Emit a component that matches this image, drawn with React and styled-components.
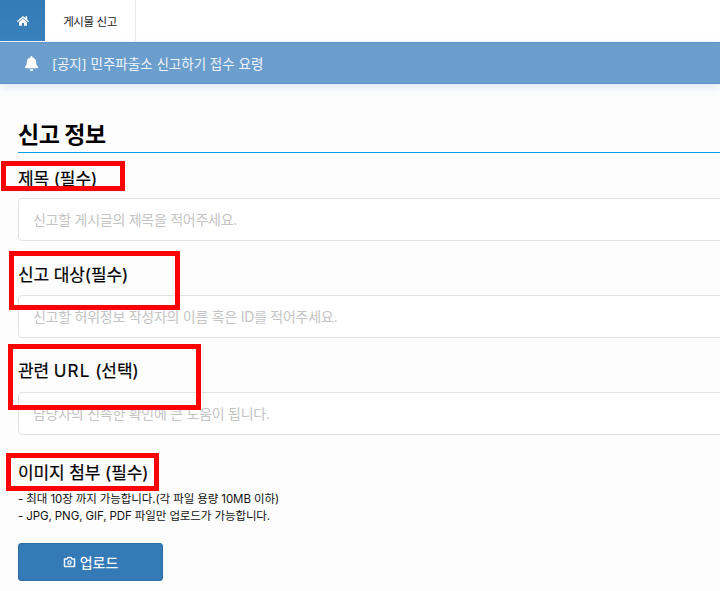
import React from "react";
import styled, { createGlobalStyle } from "styled-components";
import { FaHome, FaBell } from "react-icons/fa";

const GlobalStyle = createGlobalStyle`
  html, body {
    margin: 0;
    padding: 0;
    background: #fdfdfd;
    overflow: hidden;
  }
  * {
    box-sizing: border-box;
  }
`;

const Page = styled.div`
  position: relative;
  width: 720px;
  height: 591px;
  overflow: hidden;
  font-family: Inter, "Noto Sans CJK KR", sans-serif;
  color: #000;
`;
const TabBar = styled.div`
  display: flex;
  height: 41px;
  background: #fff;
`;
const HomeTab = styled.a`
  display: flex;
  align-items: center;
  justify-content: center;
  width: 45px;
  background: linear-gradient(to bottom, #337ab7, #3a80bd);
  color: #fff;
  font-size: 12px;
`;
const Tab = styled.a`
  display: flex;
  align-items: center;
  justify-content: center;
  width: 91px;
  border-right: 1px solid #e8e8e8;
  font-size: 11.5px;
  letter-spacing: -0.4px;
  color: #222;
`;
const Notice = styled.div`
  display: flex;
  align-items: center;
  gap: 13px;
  height: 42px;
  margin-top: 1px;
  padding-left: 24px;
  background: #6b9ecd;
  border: 1px solid #6094cb;
  border-width: 1px 0;
  box-shadow: 0 3px 8px rgba(90, 130, 230, 0.18);
  color: #eef4fa;
  font-size: 13.5px;
  svg {
    color: #fff;
    font-size: 15px;
  }
`;
const Content = styled.main`
  padding: 35px 0 0 18px;
  width: 760px;
`;
const Heading = styled.h2`
  margin: 0 0 14px;
  padding-bottom: 1px;
  border-bottom: 1px solid #00a0e2;
  font-size: 23px;
  line-height: 32px;
  font-weight: 700;
  letter-spacing: -0.5px;
`;
const Label = styled.label`
  display: block;
  font-size: 17px;
  line-height: 24px;
  font-weight: 400;
  letter-spacing: -0.1px;
  -webkit-text-stroke: 0.2px #000;
  margin-top: ${(p) => p.$top || 0}px;
  margin-bottom: ${(p) => p.$gap ?? 8}px;
`;
const WideLatin = styled.span`
  letter-spacing: 1.2px;
`;
const Input = styled.input`
  display: block;
  width: 100%;
  height: 43px;
  padding: 0 14px;
  background: #fff;
  border: 1px solid #e2e2e2;
  border-radius: 4px;
  font-family: inherit;
  font-size: 14px;
  letter-spacing: -0.26px;
  &::placeholder {
    color: #c4c4c4;
  }
`;
const Notes = styled.ul`
  margin: 0;
  padding: 0;
  list-style: none;
  font-size: 11.5px;
  line-height: 17px;
  letter-spacing: -0.1px;
  color: #111;
`;
const UploadButton = styled.button`
  display: flex;
  align-items: center;
  justify-content: center;
  gap: 4px;
  width: 145px;
  height: 38px;
  margin-top: 18px;
  background: #337ab7;
  border: 1px solid #2e6da4;
  border-radius: 3px;
  color: #f2f6fa;
  font-family: inherit;
  font-size: 14px;
  font-weight: 500;
`;
const Highlight = styled.div`
  position: absolute;
  left: ${(p) => p.$x}px;
  top: ${(p) => p.$y}px;
  width: ${(p) => p.$w}px;
  height: ${(p) => p.$h}px;
  border: 5px solid #ff0000;
`;

const CameraIcon = () => (
  <svg width="13" height="12" viewBox="0 0 13 12" fill="none">
    <path d="M1.5 3h2.6l.9-1.6h3l.9 1.6h2.6v7.5h-10z" stroke="currentColor" strokeWidth="1.5" strokeLinejoin="round" />
    <circle cx="6.5" cy="6.6" r="1.7" stroke="currentColor" strokeWidth="1.3" />
  </svg>
);

const highlights = [
  { x: 1, y: 161, w: 124, h: 30 },
  { x: 9, y: 251, w: 171, h: 59 },
  { x: 8, y: 344, w: 193, h: 66 },
  { x: 6, y: 453, w: 153, h: 38 },
];

export default function App() {
  return (
    <Page>
      <GlobalStyle />
      <TabBar>
        <HomeTab>
          <FaHome />
        </HomeTab>
        <Tab>게시물 신고</Tab>
      </TabBar>
      <Notice>
        <FaBell />
        <span>[공지] 민주파출소 신고하기 접수 요령</span>
      </Notice>
      <Content>
        <Heading>신고 정보</Heading>
        <Label $gap={7}>제목 (필수)</Label>
        <Input placeholder="신고할 게시글의 제목을 적어주세요." />
        <Label $top={22}>신고 대상(필수)</Label>
        <Input placeholder="신고할 허위정보 작성자의 이름 혹은 ID를 적어주세요." />
        <Label $top={21} $gap={9}>관련 <WideLatin>URL</WideLatin> (선택)</Label>
        <Input placeholder="담당자의 신속한 확인에 큰 도움이 됩니다." />
        <Label $top={26} $gap={6}>이미지 첨부 (필수)</Label>
        <Notes>
          <li>- 최대 10장 까지 가능합니다.(각 파일 용량 10MB 이하)</li>
          <li>- JPG, PNG, GIF, PDF 파일만 업로드가 가능합니다.</li>
        </Notes>
        <UploadButton>
          <CameraIcon />
          업로드
        </UploadButton>
      </Content>
      {highlights.map((h) => (
        <Highlight key={h.y} $x={h.x} $y={h.y} $w={h.w} $h={h.h} />
      ))}
    </Page>
  );
}
